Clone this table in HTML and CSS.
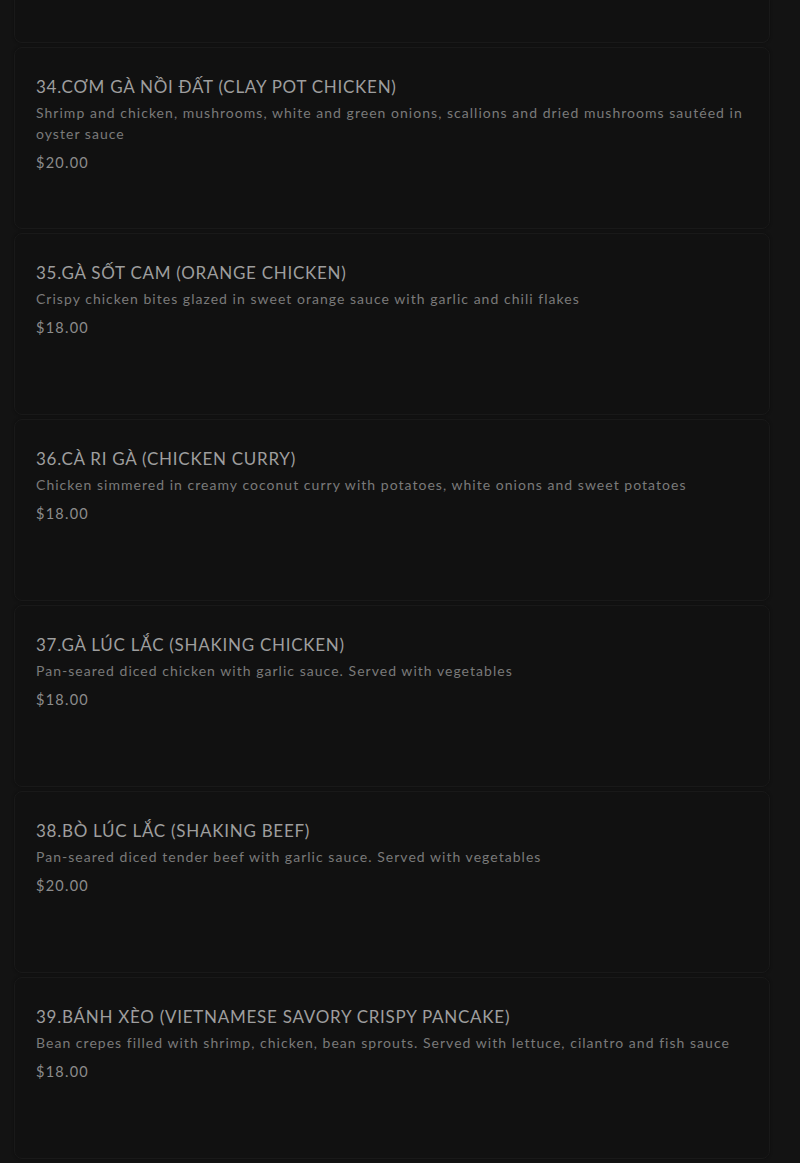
FILE: index.html
```
<!DOCTYPE html>
<html lang="vi">
<head>
<meta charset="utf-8">
<title>Menu</title>
<link rel="stylesheet" href="styles.css">
</head>
<body>
<main class="menu">
  <div class="card card--tail"></div>
  <article class="card">
    <h3 class="item-title">34.CƠM GÀ NỒI ĐẤT (CLAY POT CHICKEN)</h3>
    <p class="item-desc">Shrimp and chicken, mushrooms, white and green onions, scallions and dried mushrooms sautéed in oyster sauce</p>
    <p class="item-price">$20.00</p>
  </article>
  <article class="card">
    <h3 class="item-title">35.GÀ SỐT CAM (ORANGE CHICKEN)</h3>
    <p class="item-desc">Crispy chicken bites glazed in sweet orange sauce with garlic and chili flakes</p>
    <p class="item-price">$18.00</p>
  </article>
  <article class="card">
    <h3 class="item-title">36.CÀ RI GÀ (CHICKEN CURRY)</h3>
    <p class="item-desc">Chicken simmered in creamy coconut curry with potatoes, white onions and sweet potatoes</p>
    <p class="item-price">$18.00</p>
  </article>
  <article class="card">
    <h3 class="item-title">37.GÀ LÚC LẮC (SHAKING CHICKEN)</h3>
    <p class="item-desc">Pan-seared diced chicken with garlic sauce. Served with vegetables</p>
    <p class="item-price">$18.00</p>
  </article>
  <article class="card">
    <h3 class="item-title">38.BÒ LÚC LẮC (SHAKING BEEF)</h3>
    <p class="item-desc">Pan-seared diced tender beef with garlic sauce. Served with vegetables</p>
    <p class="item-price">$20.00</p>
  </article>
  <article class="card">
    <h3 class="item-title">39.BÁNH XÈO (VIETNAMESE SAVORY CRISPY PANCAKE)</h3>
    <p class="item-desc">Bean crepes filled with shrimp, chicken, bean sprouts. Served with lettuce, cilantro and fish sauce</p>
    <p class="item-price">$18.00</p>
  </article>
</main>
</body>
</html>
```

FILE: styles.css
```
html, body {
  margin: 0;
  padding: 0;
  background: #131313;
}
body {
  font-family: "Lato", "Noto Sans", sans-serif;
  color: #9a9a9a;
  height: 1163px;
  overflow: hidden;
}
.menu {
  display: flex;
  flex-direction: column;
  gap: 4px;
  padding: 0 30px 0 14px;
}
.card {
  box-sizing: border-box;
  height: 182px;
  padding: 27px 21px 0 21px;
  background: #111111;
  border: 1px solid #191919;
  border-radius: 8px;
  box-shadow: 0 0 3px rgba(0,0,0,0.35);
}
.card--tail {
  height: 43px;
  border-top: none;
  border-radius: 0 0 8px 8px;
}
.item-title {
  margin: 0;
  font-size: 17px;
  font-weight: 400;
  line-height: 24px;
  letter-spacing: 0.73px;
  color: #9e9e9e;
}
.item-desc {
  margin: 3px 0 0;
  font-size: 14px;
  line-height: 21px;
  letter-spacing: 1.03px;
  color: #7a7a7a;
}
.item-price {
  margin: 8px 0 0;
  font-size: 14.5px;
  line-height: 21px;
  letter-spacing: 1.25px;
  color: #8c8c8c;
}
```
